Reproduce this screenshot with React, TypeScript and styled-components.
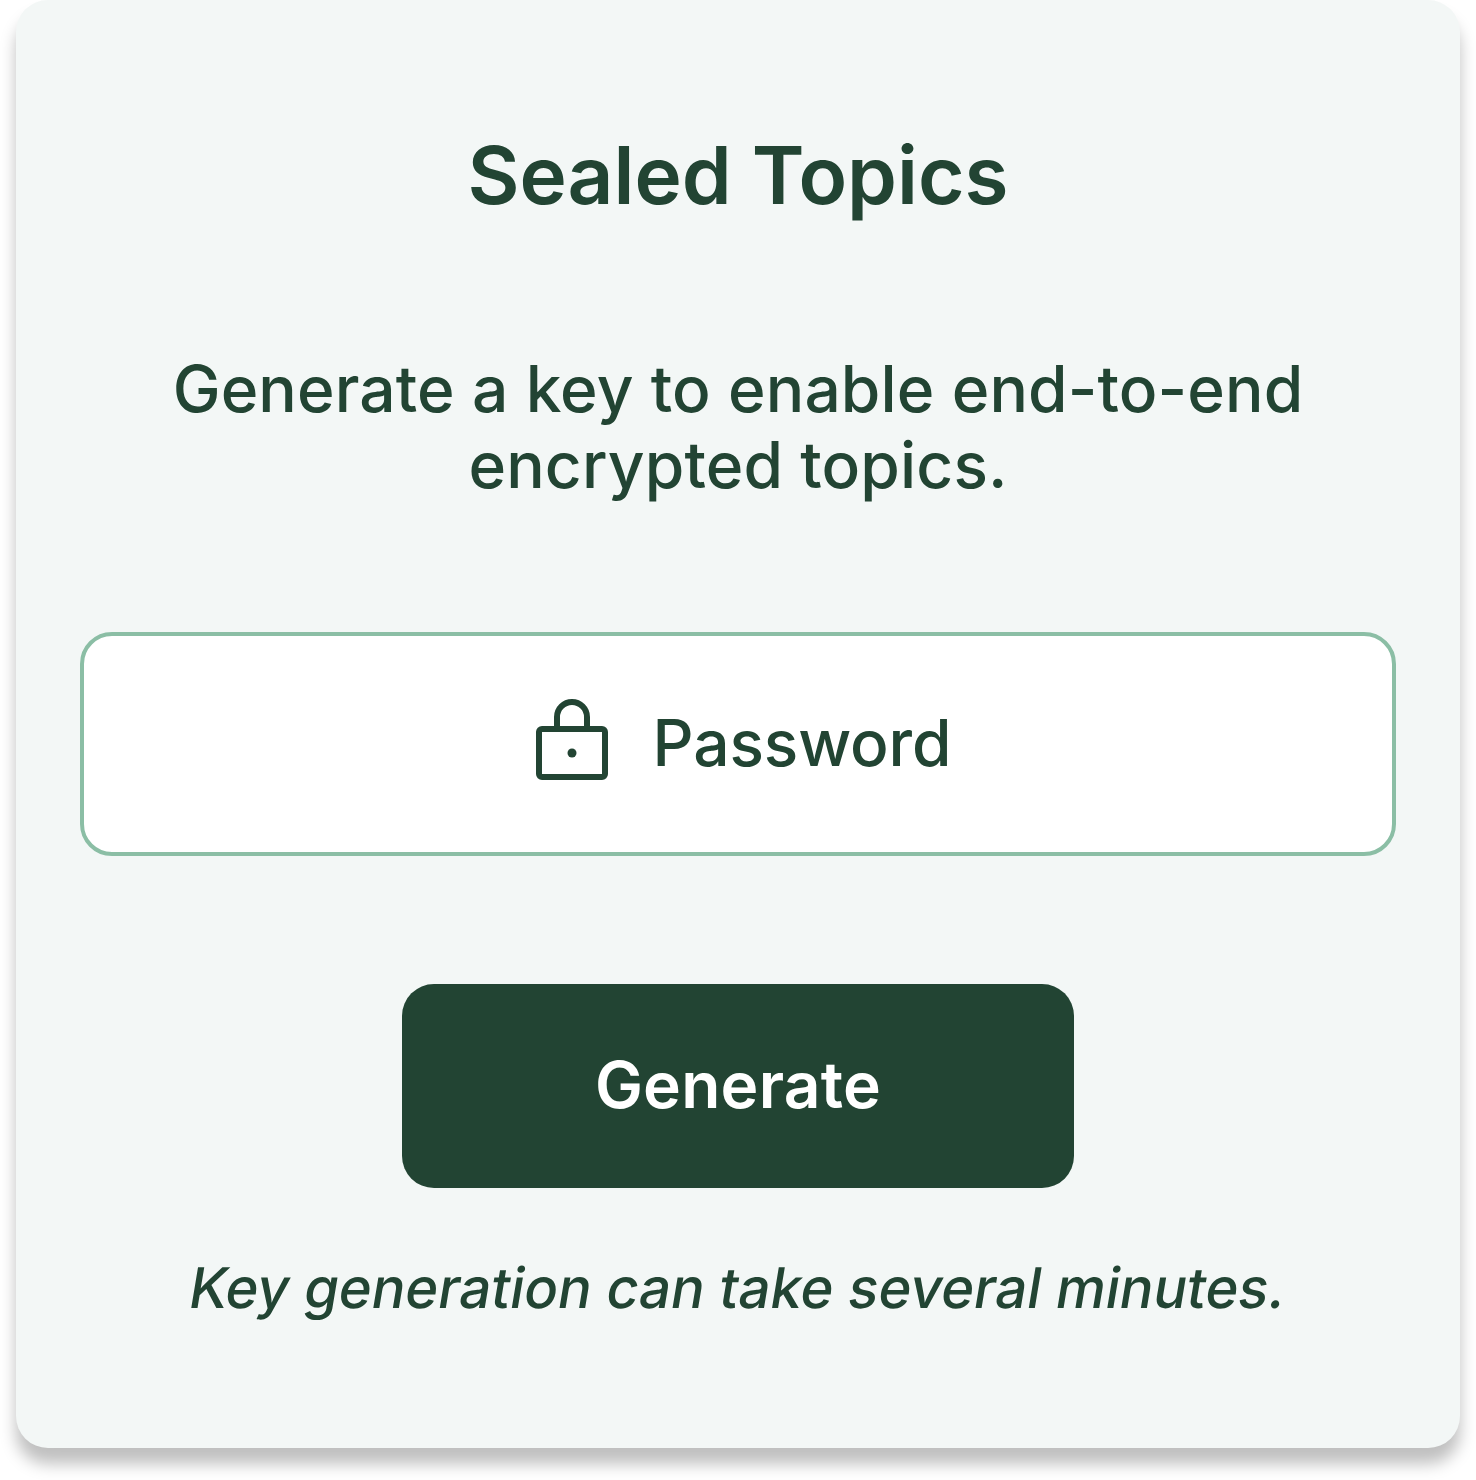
import React from "react";
import styled, { createGlobalStyle } from "styled-components";

const GlobalStyle = createGlobalStyle`
  *, *::before, *::after { box-sizing: border-box; }
  body { margin: 0; background: #fff; font-family: Inter, sans-serif; color: #224433; }
`;

const Page = styled.div`
  width: 1476px;
  height: 1480px;
  padding: 0 16px 32px;
  overflow: hidden;
`;

const Card = styled.main`
  display: flex;
  flex-direction: column;
  align-items: center;
  height: 1448px;
  padding: 127px 64px 0;
  border-radius: 32px;
  background: #f3f7f6;
  box-shadow: 0 16px 16px rgba(0, 0, 0, 0.25);
`;

const Title = styled.h1`
  margin: 0;
  font-size: 80px;
  font-weight: 600;
  line-height: 96px;
`;

const Description = styled.p`
  width: 1188px;
  margin: 128px 0 0;
  font-size: 64px;
  font-weight: 500;
  line-height: 76px;
  letter-spacing: 0.13px;
  text-align: center;
`;

const Field = styled.label`
  display: flex;
  align-items: center;
  justify-content: center;
  width: 100%;
  height: 224px;
  margin-top: 129px;
  border: 4px solid #8bbea5;
  border-radius: 32px;
  background: #fff;
`;

const LockIcon = styled.svg`
  width: 96px;
  height: 96px;
  margin: 0 32px 6px 0;
`;

const FieldText = styled.span`
  padding-bottom: 2px;
  font-size: 64px;
  font-weight: 500;
  line-height: 76px;
  letter-spacing: -0.1px;
`;

const GenerateButton = styled.button`
  width: 672px;
  height: 204px;
  margin-top: 128px;
  padding: 0 0 2px;
  border: 0;
  border-radius: 32px;
  background: #224433;
  color: #fff;
  font: 600 64px/76px Inter, sans-serif;
  letter-spacing: 0.25px;
`;

/* Slanted roman letters keep the double-storey "a". */
const Note = styled.p`
  margin: 66px 0 0;
  font-size: 56px;
  font-weight: 500;
  line-height: 68px;
  letter-spacing: -0.06px;
  white-space: nowrap;
  transform: skewX(-9.4deg);
`;

export default function App() {
  return (
    <>
      <GlobalStyle />
      <Page>
        <Card>
          <Title>Sealed Topics</Title>
          <Description>Generate a key to enable end-to-end encrypted topics.</Description>
          <Field>
            <LockIcon viewBox="0 0 96 96" fill="none" aria-hidden="true">
              <rect x="15" y="36" width="66" height="48" rx="3" stroke="#224433" strokeWidth="6" />
              <path d="M33 36V24a15 15 0 0 1 30 0v12" stroke="#224433" strokeWidth="6" />
              <circle cx="48" cy="60" r="4.5" fill="#224433" />
            </LockIcon>
            <FieldText>Password</FieldText>
          </Field>
          <GenerateButton type="button">Generate</GenerateButton>
          <Note>Key generation can take several minutes.</Note>
        </Card>
      </Page>
    </>
  );
}
